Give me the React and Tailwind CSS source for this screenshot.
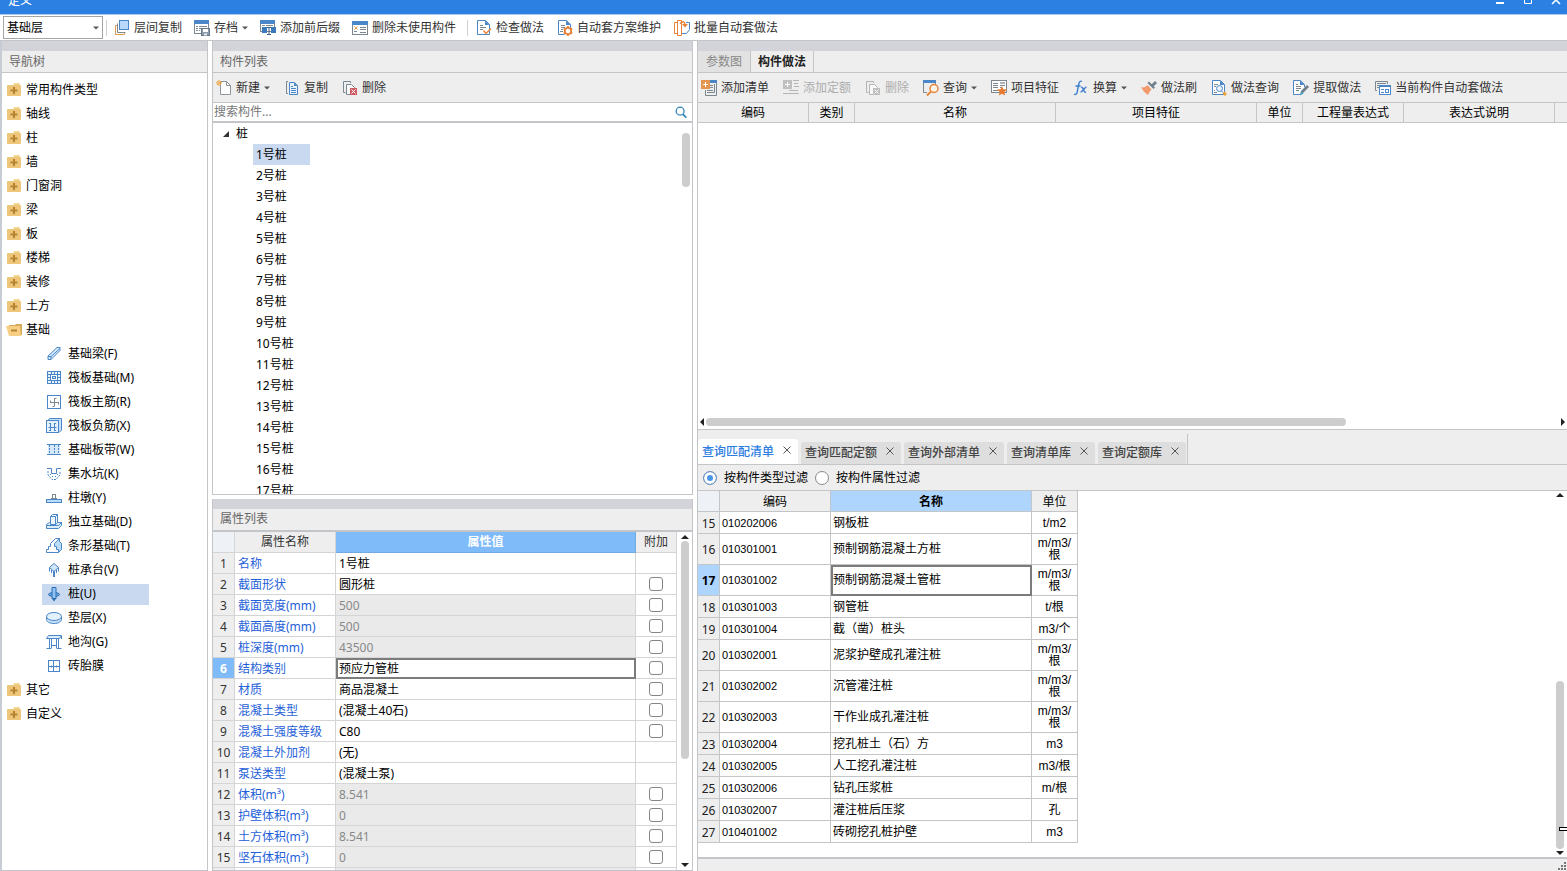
import { useState } from 'react';
import clsx from 'clsx';

const Svg = ({ children, className = 'w-4 h-4' }) => (
  <svg viewBox="0 0 16 16" fill="none" className={clsx('shrink-0', className)} aria-hidden="true">
    {children}
  </svg>
);

const BLUE = '#4a86c8';
const GRAY = '#7d8790';
const ORANGE = '#e8833a';

/* ---------- main toolbar icons ---------- */
const LayerCopyIcon = () => (
  <Svg>
    <path d="M3 5.500H1.500v9h9V13" stroke="#e09a50" />
    <path d="M3.500 3.500v9h8" stroke={GRAY} />
    <rect x="5.500" y=".5" width="9" height="9" fill="#b9d7fb" stroke={BLUE} />
  </Svg>
);
const SaveIcon = () => (
  <Svg>
    <rect x=".5" y="1.500" width="14" height="12" fill="#fff" stroke={GRAY} />
    <rect x="0" y="0" width="15" height="4" fill={BLUE} />
    <path d="M2 6.500h2M5 6.500h8M2 8.500h2M5 8.500h2M2 10.500h2M5 10.500h1" stroke={GRAY} />
    <rect x="7.500" y="8.500" width="8" height="7" fill="#8c9bab" stroke="#65788c" />
    <path d="M9 9h5v3H9z" fill="#fff" />
    <path d="M10 13.500h3v2h-3z" fill="#e5e9ee" />
  </Svg>
);
const AffixIcon = () => (
  <Svg>
    <rect x=".5" y="1.500" width="14" height="10" fill="#fff" stroke={GRAY} />
    <rect x="0" y="0" width="15" height="4" fill={BLUE} />
    <path d="M2 5.500h3M6 5.500h7" stroke={GRAY} />
    <rect x="2" y="7" width="5" height="6" fill="#3d79bd" />
    <rect x="11" y="7" width="5" height="6" fill="#3d79bd" />
    <path d="M7 7.500h4M9 7.500v7M7 14.500h4" stroke="#3f5f80" />
  </Svg>
);
const UnusedIcon = () => (
  <Svg>
    <rect x=".5" y="1.500" width="15" height="13" fill="#fff" stroke={GRAY} />
    <rect x="0" y="1" width="16" height="4" fill={BLUE} />
    <path d="m2.500 6.500 3 3m0-3-3 3" stroke="#e09a50" />
    <path d="M2 11.500h3M8 7.500h6M8 9.500h6M8 12.500h6" stroke={GRAY} />
  </Svg>
);
const CheckDocIcon = () => (
  <Svg>
    <path d="M1.500.5h8l4 4v10h-12z" fill="#fff" stroke={BLUE} />
    <path d="M9 .5v4.500h4.500z" fill={BLUE} />
    <path d="M4 5.500h3M4 7.500h6M4 9.500h3" stroke={GRAY} />
    <path d="m7.500 10.500 2.500 3 5-5" stroke={ORANGE} strokeWidth="1.500" />
  </Svg>
);
const GearDocIcon = () => (
  <Svg>
    <path d="M1.500.5h8l4 4v4M1.500.5v14h6" fill="#fff" stroke={BLUE} />
    <path d="M9 .5v4.500h4.500z" fill={BLUE} />
    <path d="M4 5.500h4M4 7.500h4M4 9.500h2M3 11.500h3" stroke={GRAY} />
    <circle cx="11" cy="11" r="3.200" fill="#fff" stroke={ORANGE} strokeWidth="1.800" />
    <path d="M11 6v2M11 14v2M6.700 8.500l1.700 1M13.600 12.500l1.700 1M6.700 13.500l1.700-1M13.600 9.500l1.700-1" stroke={ORANGE} strokeWidth="1.800" />
  </Svg>
);
const BatchIcon = () => (
  <Svg>
    <path d="M3.500 2.500h-3v11h3" stroke={ORANGE} />
    <path d="M12 2.500h3.500v7l-3 4H7" fill="#fff" stroke={BLUE} />
    <path d="M3.500.5h4v15h-4z" fill="#fff" stroke={ORANGE} />
    <path d="M6 3.500c3-3 5-2 5 2" stroke={ORANGE} strokeWidth="1.500" />
    <path d="M8 4h6l-3 3.500z" fill={ORANGE} />
  </Svg>
);

/* ---------- component list icons ---------- */
const NewIcon = () => (
  <Svg>
    <path d="M4.500 1.500h6l4 4v9h-10z" fill="#fff" stroke="#8c969f" />
    <path d="M10.500 1.500v4h4" stroke="#8c969f" />
    <path d="M3 0v6M0 3h6M1 1l4 4M5 1 1 5" stroke="#efa133" />
    <path d="M2.500 2.500h1v1h-1z" fill="#fff" />
  </Svg>
);
const CopyIcon = () => (
  <Svg>
    <path d="M4 1.500H2.500v12H4" stroke={GRAY} />
    <path d="M5.500 2.500h5l3 3v9h-8z" fill="#eaf3fd" stroke={BLUE} />
    <path d="M10 2.500v3.500h3.500z" fill={BLUE} />
    <path d="M7 6.500h2M7 8.500h5M7 10.500h5M7 12.500h5" stroke={BLUE} />
  </Svg>
);
const DeleteIcon = ({ muted }) => {
  const line = muted ? '#b5b5b5' : GRAY;
  return (
    <Svg>
      <path d="M3.500 12.500h-2v-11h7V3" stroke={line} />
      <path d="M8 14.500H4.500v-10h5l3 3V8" fill="#f8f8f8" stroke={line} />
      <rect x="8" y="8" width="7" height="7" fill={muted ? '#bdbdbd' : '#cf5b62'} />
      <path d="m9.500 9.500 4 4m0-4-4 4" stroke="#fff" />
    </Svg>
  );
};

/* ---------- practice toolbar icons ---------- */
const AddListIcon = () => (
  <Svg>
    <rect x="9" y="0" width="7" height="3" fill={BLUE} />
    <path d="M15.500 3v12.500h-11V10M13.500 4v8.500H6" stroke={GRAY} />
    <path d="M9 5.500h3M9 7.500h3M6 10.500h6" stroke={GRAY} />
    <rect x="0" y="0" width="9" height="9" fill="#e5954e" />
    <path d="M4.500 2v5M2 4.500h5" stroke="#fff" />
  </Svg>
);
const AddQuotaIcon = () => (
  <Svg>
    <path d="M10 .5h6M11 3.500h4M11 6.500h5M6 10.500h9M0 13.500h16" stroke="#b5b5b5" />
    <rect x="0" y="0" width="9" height="9" fill="#c0c0c0" />
    <path d="M4.500 2v5M2 4.500h5" stroke="#fff" />
  </Svg>
);
const QueryIcon = () => (
  <Svg>
    <path d="M.5 3v9.500H4" stroke={GRAY} />
    <path d="M0 0h13v3H0z" fill={BLUE} />
    <path d="M12.500 3v2" stroke={GRAY} />
    <circle cx="11" cy="8.500" r="4" fill="#fff3e8" stroke={ORANGE} strokeWidth="1.500" />
    <path d="m8 11.500-4 4" stroke={ORANGE} strokeWidth="2" />
  </Svg>
);
const FeatureIcon = () => (
  <Svg>
    <rect x=".5" y=".5" width="15" height="12" fill="#fff" stroke={GRAY} />
    <path d="M2 3.500h5M2 5.500h5M2 7.500h5M2 10.500h5M9 5.500h5M9 7.500h2" stroke={GRAY} />
    <path d="M9 2h5v2H9z" fill="#a9b0b7" />
    <path d="m11 6 1.400 3.200 3.600.4-2.700 2.300.8 3.600L11 13.700l-3.100 1.800.8-3.600L6 9.600l3.600-.4z" fill="#e87a2f" />
  </Svg>
);
const FxIcon = () => (
  <Svg>
    <path d="M9 1.500C7.500.5 6.300 1.500 5.800 4L4.200 12c-.5 2.300-1.700 3-3.200 2" stroke="#3f7fd0" strokeWidth="1.400" />
    <path d="M2.500 6h5M8 7.500c2.500-1.500 2.500 6 5 4.500M13.500 7c-2 0-3.500 5-6 5" stroke="#3f7fd0" strokeWidth="1.400" />
  </Svg>
);
const BrushIcon = () => (
  <Svg>
    <path d="M0 7c3 1 4.500 0 6.500-2L10.500 9.500C8 12 8 13 7 15 4 13 2 11 0 7z" fill="#f39a6d" />
    <path d="m6.500 3 6 6 1.500-1.500-6-6z" fill="#707f8c" />
    <path d="m9.500 5.500 4.500-4.500 2 2-4.500 4.500z" fill="#707f8c" />
  </Svg>
);
const PracticeQueryIcon = () => (
  <Svg>
    <path d="M1.500.5h8l4 4v10h-12z" fill="#fff" stroke={BLUE} />
    <path d="M9 .5v4.500h4.500z" fill={BLUE} />
    <path d="M3 4.500h4M3 6.500h2M3 10.500h1M3 12.500h3" stroke={GRAY} />
    <circle cx="8.500" cy="8.500" r="3" fill="#e9f2fc" stroke={BLUE} />
    <path d="m10.500 11 2 2" stroke={BLUE} />
    <path d="m13.500 11.500 2.500 2.500-2 2-2.500-2.500z" fill="#efa133" />
  </Svg>
);
const ExtractIcon = () => (
  <Svg>
    <path d="M7 14.500H.5V.5h7l4 4V7" fill="#fff" stroke={BLUE} />
    <path d="M7 .5v4.500h4.500z" fill={BLUE} />
    <path d="M3 4.500h2M3 6.500h5M3 8.500h5M3 10.500h3" stroke={GRAY} />
    <path d="m7 15 1-4 6-6 2 2-6 6z" fill="#6d7d8a" />
    <path d="m7 15.500 1.500-4 2 2z" fill="#36a0cf" />
  </Svg>
);
const AutoApplyIcon = () => (
  <Svg>
    <path d="M2 10.500H.5v-9h12V4" stroke={GRAY} />
    <path d="M2 3.500h9M2 5.500h2M2 7.500h2" stroke={GRAY} />
    <rect x="4.500" y="5.500" width="11" height="9" fill="#fff" stroke={BLUE} />
    <path d="M5 6.500h10" stroke={BLUE} />
    <path d="M6 9.500h3M6 12.500h3M10 9.500h4M10 12.500h4M10.500 9v4M13.500 9v4" stroke={BLUE} />
  </Svg>
);

/* ---------- navigation tree icons ---------- */
const FolderIcon = () => (
  <Svg>
    <path d="M8 1h5l1 1v2H7z" fill="#f3d591" />
    <rect x="1" y="3" width="14" height="11" rx="1" fill="#edc67c" />
    <path d="M8 5v7M4.500 8.500h7" stroke="#b98430" strokeWidth="2" />
  </Svg>
);
const FolderOpenIcon = () => (
  <Svg>
    <path d="M3 3h6l1-1h6v11H3z" fill="#d9a95b" />
    <path d="M0 4h14l1 10H3z" fill="#f6cf85" />
    <path d="M5 8.500h6" stroke="#b98430" strokeWidth="2" />
  </Svg>
);

const NAV_ICONS = {
  beam: (
    <>
      <path d="m2 10 9-8.500h3v3L5 13.500H2z" fill="#d6e9fb" stroke={BLUE} />
      <path d="M2 10.500h3v3M5 10.500l9-8" stroke={BLUE} />
    </>
  ),
  raft: (
    <>
      <rect x="1.500" y="1.500" width="13" height="12" fill="#eaf5fe" stroke={BLUE} />
      <rect x="4.500" y="4.500" width="7" height="6" fill="#fff" stroke={BLUE} />
      <rect x="6.500" y="6.500" width="3" height="2" fill="#d9ecfd" stroke={BLUE} />
      <path d="M5.500 2v2M8.500 2v2M11.500 2v2M5.500 11v2M8.500 11v2M11.500 11v2M2 4.500h2M2 7.500h2M2 10.500h2M12 4.500h2M12 7.500h2M12 10.500h2" stroke={BLUE} />
    </>
  ),
  mainBar: (
    <>
      <rect x="1.500" y="1.500" width="13" height="13" fill="#fff" stroke={BLUE} />
      <path d="M8.500 4v8M8.500 4.500h2M8.500 12.500h-2M4 8.500h9M4.500 8.500v-2M12.500 8.500v2" stroke={GRAY} />
    </>
  ),
  negBar: (
    <>
      <path d="m1 3 3-2.500h11.500V12L13 14.500" fill="#c9e1f8" stroke={BLUE} />
      <rect x=".5" y="2.500" width="12" height="12" fill="#e3f1fd" stroke={BLUE} />
      <path d="M2.500 9.500h8M4.500 5v7M8.500 5v7M3 5.500h2M8 5.500h2M3 12.500h2M8 12.500h2" stroke={BLUE} />
    </>
  ),
  strip: (
    <>
      <rect x="2" y="2" width="12" height="11" fill="#d6e9fb" />
      <path d="M1 2.500h14M1 12.500h14" stroke={BLUE} />
      <path d="M3.500 3v9M8.500 3v9M12.500 3v9" stroke={BLUE} strokeDasharray="2 1" />
    </>
  ),
  sump: (
    <>
      <path d="M1 2.500h4.500v5h5v-5H15" stroke={BLUE} />
      <path d="M2 5v4l4 4.500h4L14 9V5" stroke={BLUE} strokeDasharray="2 1" />
      <path d="M4 8.500h1M6 10.500h1M9 10.500h1M11 8.500h1" stroke={BLUE} />
    </>
  ),
  pier: (
    <>
      <rect x="6.500" y="4.500" width="3" height="4" fill="#fff" stroke={GRAY} />
      <path d="M5 8.500h6" stroke={GRAY} />
      <rect x=".5" y="9.500" width="15" height="3" fill="#b9dcf8" stroke={BLUE} />
    </>
  ),
  isolated: (
    <>
      <path d="m.5 10.500 3-2h12v3l-3 3H.5z" fill="#dcedfc" stroke={BLUE} />
      <path d="M4.500 10.500v-8l2-2h5v8l-2 2z" fill="#eef6fe" stroke={BLUE} />
      <path d="M4.500 2.500h5v8M9.500 2.500l2-2M.5 11.500h12l3-3" stroke={BLUE} />
    </>
  ),
  stripFound: (
    <>
      <path d="M.5 14.500v-3h2v-3h2v-3l5-5h4v3l2 2v6l-3 3z" fill="#fff" stroke={BLUE} />
      <path d="m8.500 5.500 5-5v3l2 2v6l-3 3v-3h-2v-3h-2z" fill="#b9dcf8" stroke={BLUE} />
    </>
  ),
  cap: (
    <>
      <path d="m8 1.500 4.500 4L8 9.500l-4.500-4z" fill="#d3e8fa" stroke={BLUE} />
      <path d="M3.500 5.500v4M12.500 5.500v4M5.500 8v3M10.500 8v3M7.500 9v6M8.500 9v6" stroke={BLUE} />
    </>
  ),
  pile: (
    <>
      <ellipse cx="8" cy="8.500" rx="5.500" ry="2" fill="#6ba6e0" stroke="#2f6eb5" />
      <path d="M6 1.500h4v11H6z" fill="#8fc2f2" stroke="#2f6eb5" />
      <path d="M5.500 12h5L8 15.500z" fill="#2f6eb5" />
    </>
  ),
  cushion: (
    <>
      <path d="M.5 6.500v3c0 2 3 4 7.500 4s7.500-2 7.500-4v-3" fill="#c6e0f7" stroke={BLUE} />
      <ellipse cx="8" cy="6.500" rx="7.500" ry="4" fill="#e3f1fd" stroke={BLUE} />
    </>
  ),
  trench: (
    <>
      <path d="m.5 4.500 2-3h13l-2 3z" fill="#dcedfc" stroke={BLUE} />
      <path d="M3.500 5v9M5.500 5v9M10.500 5v9M12.500 5v9M.5 14.500h5M10.500 14.500h5M5.500 11.500h5M15.500 2v3" stroke={BLUE} />
    </>
  ),
  brick: (
    <>
      <rect x="2.500" y="2.500" width="11" height="11" fill="#fff" stroke={BLUE} />
      <path d="M7.500 3v10M3 8.500h10" stroke={BLUE} />
      <path d="M5.500 7.500v2M10.500 7.500v2" stroke={BLUE} />
    </>
  ),
};

const NAV_TOP = ['常用构件类型', '轴线', '柱', '墙', '门窗洞', '梁', '板', '楼梯', '装修', '土方'];
const NAV_FOUNDATION = [
  { label: '基础梁(F)', icon: 'beam' },
  { label: '筏板基础(M)', icon: 'raft' },
  { label: '筏板主筋(R)', icon: 'mainBar' },
  { label: '筏板负筋(X)', icon: 'negBar' },
  { label: '基础板带(W)', icon: 'strip' },
  { label: '集水坑(K)', icon: 'sump' },
  { label: '柱墩(Y)', icon: 'pier' },
  { label: '独立基础(D)', icon: 'isolated' },
  { label: '条形基础(T)', icon: 'stripFound' },
  { label: '桩承台(V)', icon: 'cap' },
  { label: '桩(U)', icon: 'pile' },
  { label: '垫层(X)', icon: 'cushion' },
  { label: '地沟(G)', icon: 'trench' },
  { label: '砖胎膜', icon: 'brick' },
];
const NAV_BOTTOM = ['其它', '自定义'];

const PILES = Array.from({ length: 17 }, (_, i) => `${i + 1}号桩`);

const PROPERTIES = [
  { name: '名称', value: '1号桩' },
  { name: '截面形状', value: '圆形桩', extra: true },
  { name: '截面宽度(mm)', value: '500', extra: true, locked: true },
  { name: '截面高度(mm)', value: '500', extra: true, locked: true },
  { name: '桩深度(mm)', value: '43500', extra: true, locked: true },
  { name: '结构类别', value: '预应力管桩', extra: true, active: true },
  { name: '材质', value: '商品混凝土', extra: true },
  { name: '混凝土类型', value: '(混凝土40石)', extra: true },
  { name: '混凝土强度等级', value: 'C80', extra: true },
  { name: '混凝土外加剂', value: '(无)' },
  { name: '泵送类型', value: '(混凝土泵)' },
  { name: '体积(m³)', value: '8.541', extra: true, locked: true },
  { name: '护壁体积(m³)', value: '0', extra: true, locked: true },
  { name: '土方体积(m³)', value: '8.541', extra: true, locked: true },
  { name: '坚石体积(m³)', value: '0', extra: true, locked: true },
];

const QUERY_TABS = ['查询匹配清单', '查询匹配定额', '查询外部清单', '查询清单库', '查询定额库'];

const QUERY_ROWS = [
  { no: 15, code: '010202006', name: '钢板桩', unit: ['t/m2'] },
  { no: 16, code: '010301001', name: '预制钢筋混凝土方桩', unit: ['m/m3/', '根'] },
  { no: 17, code: '010301002', name: '预制钢筋混凝土管桩', unit: ['m/m3/', '根'], active: true },
  { no: 18, code: '010301003', name: '钢管桩', unit: ['t/根'] },
  { no: 19, code: '010301004', name: '截（凿）桩头', unit: ['m3/个'] },
  { no: 20, code: '010302001', name: '泥浆护壁成孔灌注桩', unit: ['m/m3/', '根'] },
  { no: 21, code: '010302002', name: '沉管灌注桩', unit: ['m/m3/', '根'] },
  { no: 22, code: '010302003', name: '干作业成孔灌注桩', unit: ['m/m3/', '根'] },
  { no: 23, code: '010302004', name: '挖孔桩土（石）方', unit: ['m3'] },
  { no: 24, code: '010302005', name: '人工挖孔灌注桩', unit: ['m3/根'] },
  { no: 25, code: '010302006', name: '钻孔压浆桩', unit: ['m/根'] },
  { no: 26, code: '010302007', name: '灌注桩后压浆', unit: ['孔'] },
  { no: 27, code: '010401002', name: '砖砌挖孔桩护壁', unit: ['m3'] },
];

const Arrow = ({ dir = 'down', className }) => {
  const d = { down: 'M0 4h16L8 12z', up: 'M0 12h16L8 4z', left: 'M12 0v16L4 8z', right: 'M4 0v16l8-8z' }[dir];
  return (
    <svg viewBox="0 0 16 16" className={clsx('shrink-0', className)} fill="currentColor" aria-hidden="true">
      <path d={d} />
    </svg>
  );
};

const Tool = ({ icon, label, menu, disabled }) => (
  <button
    type="button"
    disabled={disabled}
    className={clsx('flex items-center gap-1 whitespace-nowrap', disabled ? 'text-[#adadad]' : 'text-[#333]')}
  >
    {icon}
    {label}
    {menu && <Arrow className="w-[6px] h-[6px] text-[#555]" />}
  </button>
);

const PanelTitle = ({ children }) => (
  <>
    <div className="h-[10px] shrink-0 bg-[#d3d4d9]" />
    <h2 className="h-[22px] shrink-0 flex items-center pl-[7px] bg-[#eeeeee] border-b border-[#c3c5c9] text-[#666]">
      {children}
    </h2>
  </>
);

const NavFolder = ({ label, open }) => (
  <button type="button" className="h-6 flex items-center gap-1 pl-1">
    {open ? <FolderOpenIcon /> : <FolderIcon />}
    {label}
  </button>
);

const NavTree = () => {
  const [current, setCurrent] = useState('桩(U)');
  return (
    <nav className="min-h-0 flex flex-col border-l-2 border-r border-b border-[#c3c5c9] border-l-[#c8ccd4] overflow-hidden">
      <PanelTitle>导航树</PanelTitle>
      <ul className="pt-[5px]">
        {NAV_TOP.map((label) => (
          <li key={label}><NavFolder label={label} /></li>
        ))}
        <li>
          <NavFolder label="基础" open />
          <ul className="pl-10">
            {NAV_FOUNDATION.map((item) => (
              <li key={item.label} className="h-6 flex items-center">
                <button
                  type="button"
                  onClick={() => setCurrent(item.label)}
                  className={clsx(
                    'w-[107px] h-[21px] flex items-center gap-[6px] pl-1',
                    current === item.label && 'bg-[#c9d9f0]'
                  )}
                >
                  <Svg>{NAV_ICONS[item.icon]}</Svg>
                  {item.label}
                </button>
              </li>
            ))}
          </ul>
        </li>
        {NAV_BOTTOM.map((label) => (
          <li key={label}><NavFolder label={label} /></li>
        ))}
      </ul>
    </nav>
  );
};

const ComponentList = () => {
  const [current, setCurrent] = useState('1号桩');
  return (
    <section className="flex-[454] min-h-0 flex flex-col border-x border-b border-[#c3c5c9] overflow-hidden">
      <PanelTitle>构件列表</PanelTitle>
      <div className="h-[30px] shrink-0 flex items-center gap-[14px] pl-[3px] bg-[#eeeeee] border-b border-[#c3c5c9]">
        <Tool icon={<NewIcon />} label="新建" menu />
        <Tool icon={<CopyIcon />} label="复制" />
        <Tool icon={<DeleteIcon />} label="删除" />
      </div>
      <div className="h-5 shrink-0 flex items-center border-b-2 border-[#c3c5c9]">
        <input
          type="text"
          aria-label="搜索构件"
          placeholder="搜索构件..."
          className="flex-1 pl-px outline-none placeholder:text-[#777]"
        />
        <button type="button" aria-label="搜索" className="pr-1">
          <Svg className="w-3.5 h-3.5">
            <circle cx="7" cy="7" r="4.500" stroke="#2f84b8" strokeWidth="1.500" />
            <path d="m10 10.500 4 4" stroke="#2f84b8" strokeWidth="2" />
          </Svg>
        </button>
      </div>
      <div className="flex-1 min-h-0 flex">
        <ul className="flex-1 overflow-hidden">
          <li>
            <button type="button" className="h-[21px] flex items-center gap-[6px] pl-[9px]">
              <svg viewBox="0 0 8 8" className="w-2 h-2" aria-hidden="true">
                <path d="M7 1v6H1z" fill="#333" />
              </svg>
              桩
            </button>
            <ul className="pl-10">
              {PILES.map((label) => (
                <li key={label}>
                  <button
                    type="button"
                    onClick={() => setCurrent(label)}
                    className={clsx(
                      'w-[57px] h-[21px] flex items-center pl-[3px] whitespace-nowrap',
                      current === label && 'bg-[#c9d9f0]'
                    )}
                  >
                    {label}
                  </button>
                </li>
              ))}
            </ul>
          </li>
        </ul>
        <div className="w-[10px] pt-[10px]">
          <div className="w-2 h-[54px] rounded-full bg-[#cdcdcd]" />
        </div>
      </div>
    </section>
  );
};

const PropertyList = () => (
  <section className="flex-[372] min-h-0 flex flex-col border-x border-b border-[#c3c5c9] overflow-hidden">
    <PanelTitle>属性列表</PanelTitle>
    <div className="flex-1 min-h-0 flex border-t border-[#c3c5c9]">
      <div className="flex-1 overflow-hidden">
        <table className="w-full table-fixed border-separate border-spacing-0">
          <colgroup>
            <col className="w-[22px]" />
            <col className="w-[101px]" />
            <col />
            <col className="w-[41px]" />
          </colgroup>
          <thead>
            <tr className="h-[21px] text-[#333]">
              <th className="p-0 border-r border-b border-[#d5d5d5] bg-[#eef1f6]" />
              <th className="p-0 pt-px border-r border-b border-[#d5d5d5] bg-[#eeeeee] font-normal">属性名称</th>
              <th className="p-0 pt-px border-r border-b border-[#74a9e0] bg-[#80bbf9] text-white font-bold">属性值</th>
              <th className="p-0 pt-px border-r border-b border-[#d5d5d5] bg-[#eeeeee] font-normal">附加</th>
            </tr>
          </thead>
          <tbody>
            {PROPERTIES.map((row, i) => (
              <tr key={row.name} className="h-[21px] leading-4 whitespace-nowrap">
                <td
                  className={clsx(
                    'p-0 pt-[2px] border-r border-b border-[#d5d5d5] text-center',
                    row.active ? 'bg-[#80bbf9] text-white font-bold' : 'bg-[#eeeeee] text-[#333]'
                  )}
                >
                  {i + 1}
                </td>
                <td className="p-0 pt-[2px] pl-[3px] border-r border-b border-[#d5d5d5] text-[#1f5fd8]">{row.name}</td>
                <td
                  className={clsx(
                    'p-0 pt-[2px] pl-[3px] border-r border-b border-[#d5d5d5]',
                    row.locked && 'bg-[#eaeaea] text-[#888]',
                    row.active && 'outline-2 -outline-offset-2 outline-[#7c7c7c]'
                  )}
                >
                  {row.value}
                </td>
                <td className="p-0 border-r border-b border-[#d5d5d5]">
                  {row.extra && (
                    <input
                      type="checkbox"
                      aria-label={`${row.name} 附加`}
                      className="block mx-auto w-3.5 h-3.5 appearance-none rounded-[3px] border border-[#858585] bg-white checked:bg-[#80bbf9]"
                    />
                  )}
                </td>
              </tr>
            ))}
            <tr className="h-[21px]">
              <td className="border-r border-[#d5d5d5] bg-[#eeeeee]" />
              <td className="border-r border-[#d5d5d5]" />
              <td className="border-r border-[#d5d5d5] bg-[#eaeaea]" />
              <td className="border-r border-[#d5d5d5]" />
            </tr>
          </tbody>
        </table>
      </div>
      <div className="w-[15px] flex flex-col items-center py-px text-[#222]">
        <Arrow dir="up" className="w-2 h-2" />
        <div className="flex-[218] w-2 rounded-full bg-[#cdcdcd]" />
        <div className="flex-[102]" />
        <Arrow className="w-2 h-2" />
      </div>
    </div>
  </section>
);

const PracticePanel = () => (
  <section className="flex-[777] min-h-0 flex flex-col border-l border-b border-[#c3c5c9] overflow-hidden">
    <div className="h-[10px] shrink-0 bg-[#d3d4d9]" />
    <div className="h-[22px] shrink-0 flex bg-[#eeeeee] border-b border-[#c3c5c9]">
      <button type="button" className="px-2 bg-[#e2e2e2] border-r border-[#c3c5c9] text-[#888]">参数图</button>
      <button type="button" className="px-[7px] border-r border-[#c3c5c9] text-[#222] font-bold">构件做法</button>
    </div>
    <div className="h-[30px] shrink-0 flex items-center gap-[14px] pl-[3px] bg-[#eeeeee] border-b border-[#c3c5c9]">
      <Tool icon={<AddListIcon />} label="添加清单" />
      <Tool icon={<AddQuotaIcon />} label="添加定额" disabled />
      <Tool icon={<DeleteIcon muted />} label="删除" disabled />
      <Tool icon={<QueryIcon />} label="查询" menu />
      <Tool icon={<FeatureIcon />} label="项目特征" />
      <Tool icon={<FxIcon />} label="换算" menu />
      <Tool icon={<BrushIcon />} label="做法刷" />
      <Tool icon={<PracticeQueryIcon />} label="做法查询" />
      <Tool icon={<ExtractIcon />} label="提取做法" />
      <Tool icon={<AutoApplyIcon />} label="当前构件自动套做法" />
    </div>
    <table className="w-full table-fixed border-separate border-spacing-0">
      <thead>
        <tr className="h-5 bg-[#eeeeee] whitespace-nowrap">
          <th className="w-[111px] p-0 pt-px border-r border-b border-[#c3c5c9] font-normal">编码</th>
          <th className="w-[46px] p-0 pt-px border-r border-b border-[#c3c5c9] font-normal">类别</th>
          <th className="w-[201px] p-0 pt-px border-r border-b border-[#c3c5c9] font-normal">名称</th>
          <th className="w-[201px] p-0 pt-px border-r border-b border-[#c3c5c9] font-normal">项目特征</th>
          <th className="w-[46px] p-0 pt-px border-r border-b border-[#c3c5c9] font-normal">单位</th>
          <th className="w-[101px] p-0 pt-px border-r border-b border-[#c3c5c9] font-normal">工程量表达式</th>
          <th className="w-[151px] p-0 pt-px border-r border-b border-[#c3c5c9] font-normal">表达式说明</th>
          <th className="p-0 border-b border-[#c3c5c9]" />
        </tr>
      </thead>
    </table>
    <div className="flex-1" />
    <div className="h-[15px] shrink-0 flex items-center text-[#222]">
      <Arrow dir="left" className="w-2 h-2" />
      <div className="flex-[640] h-2 rounded-full bg-[#cdcdcd]" />
      <div className="flex-[213]" />
      <Arrow dir="right" className="w-2 h-2" />
    </div>
  </section>
);

const FilterRadio = ({ value, checked, onChange }) => (
  <label className="flex items-center gap-[7px]">
    <input
      type="radio"
      name="filter"
      value={value}
      checked={checked}
      onChange={() => onChange(value)}
      className="w-3.5 h-3.5 appearance-none rounded-full border border-[#8a8a8a] bg-white checked:border-[#6f8fb3] checked:bg-[#4a94e8] checked:shadow-[inset_0_0_0_3px_#fff]"
    />
    {value}
  </label>
);

const QueryPanel = () => {
  const [tab, setTab] = useState(QUERY_TABS[0]);
  const [filter, setFilter] = useState('按构件类型过滤');
  return (
    <section className="relative flex-[883] min-h-0 flex flex-col border-l border-[#c3c5c9] bg-[#eeeeee]">
      <div className="h-[35px] shrink-0 flex items-end border-b border-[#c3c5c9]">
        <div className="h-[30px] flex items-end gap-[3px] pr-px border-r border-[#c3c5c9]">
          {QUERY_TABS.map((label) => (
            <div
              key={label}
              className={clsx(
                'flex items-center gap-[9px] pl-1 pr-[7px] rounded-t-[3px] whitespace-nowrap font-medium',
                tab === label ? 'h-[25px] bg-white text-[#2b7de1]' : 'h-[22px] bg-[#dedede] text-[#444]'
              )}
            >
              <button type="button" onClick={() => setTab(label)}>{label}</button>
              <button type="button" aria-label={`关闭${label}`} className="pb-1">
                <svg viewBox="0 0 8 8" className="w-2 h-2" aria-hidden="true">
                  <path d="m.5.5 7 7m0-7-7 7" stroke="#555" />
                </svg>
              </button>
            </div>
          ))}
        </div>
      </div>
      <div className="h-[26px] shrink-0 flex items-center gap-[7px] pl-[5px] border-b border-[#c3c5c9]">
        <FilterRadio value="按构件类型过滤" checked={filter === '按构件类型过滤'} onChange={setFilter} />
        <FilterRadio value="按构件属性过滤" checked={filter === '按构件属性过滤'} onChange={setFilter} />
      </div>
      <div className="flex-1 min-h-0 flex justify-between bg-white border-b-2 border-[#c3c5c9]">
        <div className="overflow-hidden">
          <table className="w-[380px] table-fixed border-separate border-spacing-0">
            <thead>
              <tr className="h-[21px]">
                <th className="w-[22px] p-0 border-r border-b border-[#c3c5c9] bg-[#eef1f6]" />
                <th className="w-[111px] p-0 pt-px border-r border-b border-[#c3c5c9] bg-[#eeeeee] font-normal">编码</th>
                <th className="w-[201px] p-0 pt-px border-r border-b border-[#c3c5c9] bg-[#aed5fd] font-bold">名称</th>
                <th className="w-[46px] p-0 pt-px border-r border-b border-[#c3c5c9] bg-[#eeeeee] font-normal">单位</th>
              </tr>
            </thead>
            <tbody>
              {QUERY_ROWS.map((row) => (
                <tr key={row.no} className={clsx('leading-3', row.unit.length > 1 ? 'h-[31px]' : 'h-[22px]')}>
                  <td
                    className={clsx(
                      'p-0 pt-[2px] border-r border-b border-[#c3c5c9] text-center',
                      row.active ? 'bg-[#aed5fd] font-bold' : 'bg-[#eeeeee] text-[#222]'
                    )}
                  >
                    {row.no}
                  </td>
                  <td className="py-0 pl-[2px] pr-0 border-r border-b border-[#c3c5c9] font-['Liberation_Sans','Noto_Sans_CJK_SC',sans-serif] text-[11px]">
                    {row.code}
                  </td>
                  <td
                    className={clsx(
                      'py-0 pl-[2px] pr-0 border-r border-b border-[#c3c5c9]',
                      row.active && 'outline-2 -outline-offset-2 outline-[#7c7c7c]'
                    )}
                  >
                    {row.name}
                  </td>
                  <td className="p-0 border-r border-b border-[#c3c5c9] text-center font-['Liberation_Sans','Noto_Sans_CJK_SC',sans-serif]">
                    {row.unit.map((part) => (
                      <span key={part} className="block">{part}</span>
                    ))}
                  </td>
                </tr>
              ))}
            </tbody>
          </table>
        </div>
        <div className="w-[11px] flex flex-col items-start text-[#222]">
          <Arrow dir="up" className="w-2 h-2" />
          <div className="flex-[182]" />
          <div className="flex-[168] w-2 rounded-full bg-[#cdcdcd]" />
          <Arrow className="w-2 h-2" />
        </div>
      </div>
      <div className="h-3 shrink-0 flex justify-end items-end">
        <svg viewBox="0 0 9 9" className="w-[9px] h-[9px]" fill="#777" aria-hidden="true">
          <path d="M6 0h2v2H6zM3 3h2v2H3zM6 3h2v2H6zM0 6h2v2H0zM3 6h2v2H3zM6 6h2v2H6z" />
        </svg>
      </div>
      {/* splitter handle over the scrollbar */}
      <div className="absolute right-0 bottom-10 w-2 h-1 border border-r-0 border-black bg-white" />
    </section>
  );
};

const App = () => (
  <div className="h-screen flex flex-col overflow-hidden bg-white font-['Noto_Sans','Noto_Sans_CJK_SC',sans-serif] text-[12px] leading-4 text-black">
    <header className="h-[15px] shrink-0 flex items-end justify-between pl-2 pr-[6px] bg-[#2b80e2] border-b border-[#a9c9ee] text-white overflow-hidden">
      <h1 className="pb-[5px]">定义</h1>
      <div className="flex gap-[18px]">
        <button type="button" aria-label="最小化">
          <svg viewBox="0 0 10 14" className="w-[10px] h-[14px]" aria-hidden="true">
            <path d="M1 3h8" stroke="#fff" strokeWidth="2" />
          </svg>
        </button>
        <button type="button" aria-label="最大化">
          <svg viewBox="0 0 10 14" className="w-[10px] h-[14px]" fill="none" aria-hidden="true">
            <path d="M1.500-3.500h7v7h-7z" stroke="#fff" />
          </svg>
        </button>
        <button type="button" aria-label="关闭">
          <svg viewBox="0 0 10 14" className="w-[10px] h-[14px]" fill="none" aria-hidden="true">
            <path d="m1-4 8 8M9-4 1 4" stroke="#fff" strokeWidth="1.500" />
          </svg>
        </button>
      </div>
    </header>

    <div className="h-[26px] shrink-0 flex items-center gap-[3px] pl-[3px] border-b border-[#c3c5c9]">
      <div className="relative">
        <select
          aria-label="楼层"
          defaultValue="基础层"
          className="w-[100px] h-[23px] appearance-none border border-[#a5a5a5] bg-white pl-[3px]"
        >
          <option>基础层</option>
          <option>首层</option>
        </select>
        <Arrow className="absolute right-1 top-[9px] w-[6px] h-[6px] text-[#555] pointer-events-none" />
      </div>
      <div className="h-4 flex items-center gap-3 pl-[7px] pr-2 border-l border-[#d0d0d0]">
        <Tool icon={<LayerCopyIcon />} label="层间复制" />
        <Tool icon={<SaveIcon />} label="存档" menu />
        <Tool icon={<AffixIcon />} label="添加前后缀" />
        <Tool icon={<UnusedIcon />} label="删除未使用构件" />
      </div>
      <div className="h-4 flex items-center gap-[13px] pl-2 border-l border-[#d0d0d0]">
        <Tool icon={<CheckDocIcon />} label="检查做法" />
        <Tool icon={<GearDocIcon />} label="自动套方案维护" />
        <Tool icon={<BatchIcon />} label="批量自动套做法" />
      </div>
    </div>

    <main className="flex-1 min-h-0 grid grid-cols-[208px_481px_1fr] grid-rows-[minmax(0,1fr)] gap-1">
      <NavTree />
      <div className="min-h-0 flex flex-col gap-1">
        <ComponentList />
        <PropertyList />
      </div>
      <div className="min-w-0 min-h-0 flex flex-col">
        <PracticePanel />
        <QueryPanel />
      </div>
    </main>
  </div>
);

export default App;
